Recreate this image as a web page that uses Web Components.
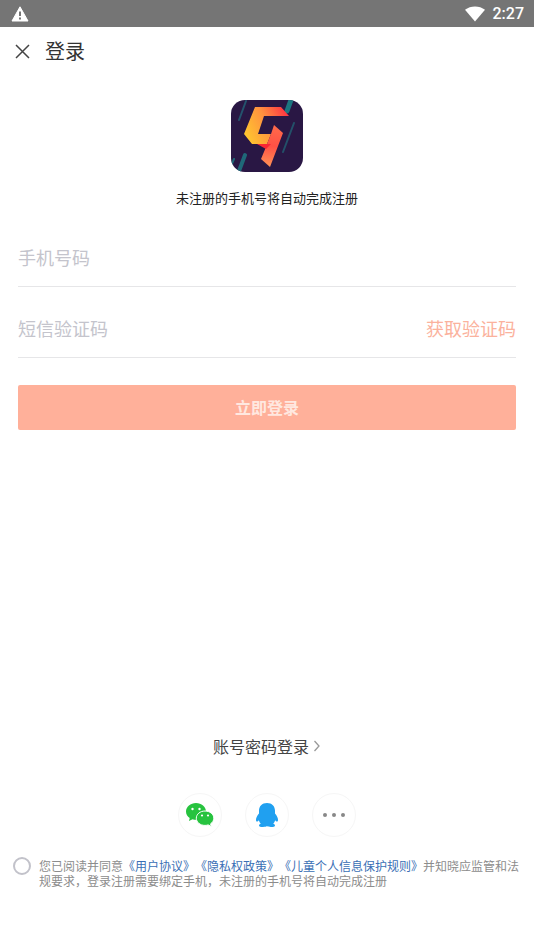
<!DOCTYPE html>
<html lang="zh-CN">
<head>
<meta charset="utf-8">
<meta name="viewport" content="width=device-width, initial-scale=1">
<title>登录</title>
<style>
  body { margin: 0; background: #fff; color: #333; font-family: "Noto Sans CJK SC", sans-serif; }
</style>
</head>
<body>
<login-page></login-page>
<script>
const define = (name, html, setup) => {
  const template = document.createElement("template");
  template.innerHTML = html;
  customElements.define(name, class extends HTMLElement {
    constructor() {
      super();
      this.attachShadow({ mode: "open" }).append(template.content.cloneNode(true));
    }
    connectedCallback() { if (setup) setup(this, this.shadowRoot); }
  });
};

define("status-bar", `
<style>
  :host { display: flex; align-items: center; height: 27px; padding: 0 10px 0 11px; background: #757575; color: #fff; font: 500 16px/27px Roboto, sans-serif; }
  .warn { margin-right: auto; }
  .wifi { margin-right: 8px; }
  svg { display: block; }
</style>
<svg class="warn" width="18" height="16" viewBox="0 0 18 16" aria-hidden="true"><path d="M9 .8 17 15H1Z" fill="#fff" stroke="#fff" stroke-linejoin="round"/><path d="M9 5.5v4.6M9 11.5v2" stroke="#757575" stroke-width="2"/></svg>
<svg class="wifi" width="20" height="16" viewBox="0 0 20 16" aria-hidden="true"><path d="M0 3.8C5.5-.7 14.5-.7 20 3.8L10 15.5Z" fill="#fff"/></svg>
<time>2:27</time>`);

define("title-bar", `
<style>
  :host { display: flex; align-items: center; gap: 14px; height: 48px; padding: 0 14px; }
  button { width: 17px; height: 17px; padding: 0; border: 0; background: none; }
  svg { display: block; }
  h1 { margin: 0; font-size: 20px; line-height: 28px; font-weight: 400; color: #333; }
</style>
<button type="button" aria-label="关闭"><svg width="17" height="17" viewBox="0 0 17 17"><path d="M2 2 15 15M15 2 2 15" stroke="#444" stroke-width="1.5" fill="none"/></svg></button>
<h1><slot></slot></h1>`);

define("app-logo", `
<style>
  :host { display: block; width: 72px; height: 72px; }
  svg { display: block; }
</style>
<svg width="72" height="72" viewBox="0 0 72 72" role="img" aria-label="应用图标">
  <defs>
    <clipPath id="c"><rect width="72" height="72" rx="14"/></clipPath>
    <linearGradient id="a" x1="14" y1="34" x2="58" y2="12" gradientUnits="userSpaceOnUse"><stop stop-color="#ffc52f"/><stop offset=".5" stop-color="#ff913f"/><stop offset="1" stop-color="#fd2c43"/></linearGradient>
    <linearGradient id="b" x1="42" y1="26" x2="38" y2="66" gradientUnits="userSpaceOnUse"><stop stop-color="#ff6a4a"/><stop offset=".5" stop-color="#ff5145"/><stop offset="1" stop-color="#ff9055"/></linearGradient>
  </defs>
  <g clip-path="url(#c)">
    <rect width="72" height="72" fill="#291744"/>
    <g stroke-linecap="round" fill="none">
      <path d="M15 1 8 20" stroke="#24536d" stroke-width="2"/>
      <path d="M60 0 56 11" stroke="#1b7680" stroke-width="5"/>
      <path d="M63 23 52 52" stroke="#235069" stroke-width="2"/>
      <path d="M14 55 8 71" stroke="#1f6878" stroke-width="4"/>
      <path d="M3 59 0 66" stroke="#1f6878" stroke-width="2"/>
    </g>
    <path d="M24 7H50L58 16H33L27 34H40L36 44H21L13 34Z" fill="url(#a)"/>
    <path d="M43 25 52 33 39 67 30 59 35 47 30 44H36L40 34Z" fill="url(#b)"/>
    <path d="M26 44H40L35 49Z" fill="#f82734"/>
  </g>
</svg>`);

define("form-field", `
<style>
  :host { display: flex; align-items: center; height: 58px; border-bottom: 1px solid #e6e6e8; }
  input { flex: 1; min-width: 0; height: 28px; padding: 0; border: 0; outline: 0; background: none; font: 400 18px/28px "Noto Sans CJK SC", sans-serif; color: #333; }
  input::placeholder { color: #c4c4cc; opacity: 1; }
</style>
<input type="text"><slot></slot>`, (host, root) => {
  const input = root.querySelector("input");
  input.placeholder = host.getAttribute("label");
  input.inputMode = "numeric";
  input.setAttribute("aria-label", host.getAttribute("label"));
});

define("code-button", `
<style>
  :host { display: block; }
  button { display: block; padding: 0; border: 0; background: none; color: #fbb29d; font: 400 18px/28px "Noto Sans CJK SC", sans-serif; }
</style>
<button type="button"><slot></slot></button>`);

define("submit-button", `
<style>
  :host { display: block; }
  button { display: block; width: 100%; height: 45px; padding: 0 0 2px; border: 0; border-radius: 2px; background: #ffb09a; color: #ffe8e0; font: 700 16px/24px "Noto Sans CJK SC", sans-serif; }
</style>
<button type="button"><slot></slot></button>`);

define("password-link", `
<style>
  :host { display: block; }
  a { display: flex; align-items: center; gap: 4px; color: #444; font-size: 16px; line-height: 24px; text-decoration: none; }
  svg { display: block; }
</style>
<a href="#password"><slot></slot><svg width="8" height="12" viewBox="0 0 8 12" aria-hidden="true"><path d="M1.5 1 6 6 1.5 11" fill="none" stroke="#999" stroke-width="1.3"/></svg></a>`);

define("social-button", `
<style>
  :host { display: block; }
  button { display: grid; place-items: center; width: 44px; height: 44px; padding: 0; border: 1px solid #f6f6f6; border-radius: 50%; background: #fff; }
</style>
<button type="button"><slot></slot></button>`, (host, root) => {
  root.querySelector("button").setAttribute("aria-label", host.getAttribute("label"));
});

define("agreement-row", `
<style>
  :host { display: flex; align-items: flex-start; gap: 8px; padding: 0 14px 0 13px; }
  input { appearance: none; flex: none; box-sizing: border-box; width: 18px; height: 18px; margin: 0; border: 2px solid #c2c2ca; border-radius: 50%; background: #fff; }
  input:checked { background: #ffb09a; }
  label { flex: 1; padding-top: 1px; color: #8c8c8c; font-size: 12px; line-height: 15px; text-spacing-trim: space-all; }
  a { color: #3a6fb5; text-decoration: none; }
</style>
<input type="checkbox" id="agree"><label for="agree">您已阅读并同意<a href="#terms">《用户协议》</a><a href="#privacy">《隐私权政策》</a><a href="#children">《儿童个人信息保护规则》</a>并知晓应监管和法规要求，登录注册需要绑定手机，未注册的手机号将自动完成注册</label>`);

define("login-page", `
<style>
  :host { display: flex; flex-direction: column; min-height: 100vh; }
  main { flex: 1; display: flex; flex-direction: column; padding: 25px 0 61px; }
  .brand { display: flex; flex-direction: column; align-items: center; gap: 16px; }
  p { margin: 0; font-size: 13px; line-height: 20px; color: #222; }
  form { display: flex; flex-direction: column; gap: 12px; padding: 20px 18px 0; }
  submit-button { margin-top: 15px; }
  .other { display: flex; flex-direction: column; align-items: center; gap: 35px; margin-top: auto; padding: 24px 0 20px; }
  nav { display: flex; gap: 23px; }
  svg { display: block; }
</style>
<status-bar></status-bar>
<title-bar>登录</title-bar>
<main>
  <div class="brand"><app-logo></app-logo><p>未注册的手机号将自动完成注册</p></div>
  <form>
    <form-field label="手机号码"></form-field>
    <form-field label="短信验证码"><code-button>获取验证码</code-button></form-field>
    <submit-button>立即登录</submit-button>
  </form>
  <div class="other">
    <password-link>账号密码登录</password-link>
    <nav aria-label="其他登录方式">
      <social-button label="微信登录"><svg width="28" height="24" viewBox="0 0 28 24">
        <path d="M10 0C4.500 0 0 3.700 0 8.500c0 2.700 1.400 5 3.700 6.500L3 18l3.500-1.800c1.200.4 2.300.5 3.500.5 5.500 0 10-3.700 10-8.300S15.500 0 10 0Z" fill="#27c33f"/>
        <path d="M19 8c-4.900 0-8.700 3.200-8.700 7.200s3.800 7.200 8.700 7.200c1.100 0 2.200-.2 3.200-.5l3.100 1.700-.7-2.800c2-1.400 3.200-3.300 3.200-5.600C27.800 11.200 23.900 8 19 8Z" fill="#27c33f" stroke="#fff" stroke-width="1"/>
        <g fill="#fff"><circle cx="6.500" cy="6" r="1.200"/><circle cx="13.500" cy="6" r="1.200"/><circle cx="16" cy="12.500" r="1.100"/><circle cx="22" cy="12.500" r="1.100"/></g>
      </svg></social-button>
      <social-button label="QQ登录"><svg width="22" height="24" viewBox="0 0 22 24">
        <path d="M11 0C6 0 3 3.200 3 7.800v2.600C1.200 12.500 0 14.800 0 16.700c0 1.400.5 1.900 1 1.900.7 0 1.300-.6 1.800-1.300.4 1.500 1.100 2.700 2 3.500-1.200.4-1.800 1-1.800 1.600 0 1.100 1.600 1.600 4 1.600 2 0 3.300-.3 4-.9.700.6 2 .9 4 .9 2.400 0 4-.5 4-1.600 0-.6-.6-1.200-1.800-1.600.9-.8 1.600-2 2-3.500.5.700 1.100 1.300 1.800 1.300.5 0 1-.5 1-1.900 0-1.900-1.200-4.200-3-6.300V7.800C19 3.200 16 0 11 0Z" fill="#20a0f0"/>
      </svg></social-button>
      <social-button label="更多"><svg width="24" height="6" viewBox="0 0 24 6"><g fill="#888"><circle cx="3" cy="3" r="2"/><circle cx="12" cy="3" r="2"/><circle cx="21" cy="3" r="2"/></g></svg></social-button>
    </nav>
  </div>
  <agreement-row></agreement-row>
</main>`);
</script>
</body>
</html>
